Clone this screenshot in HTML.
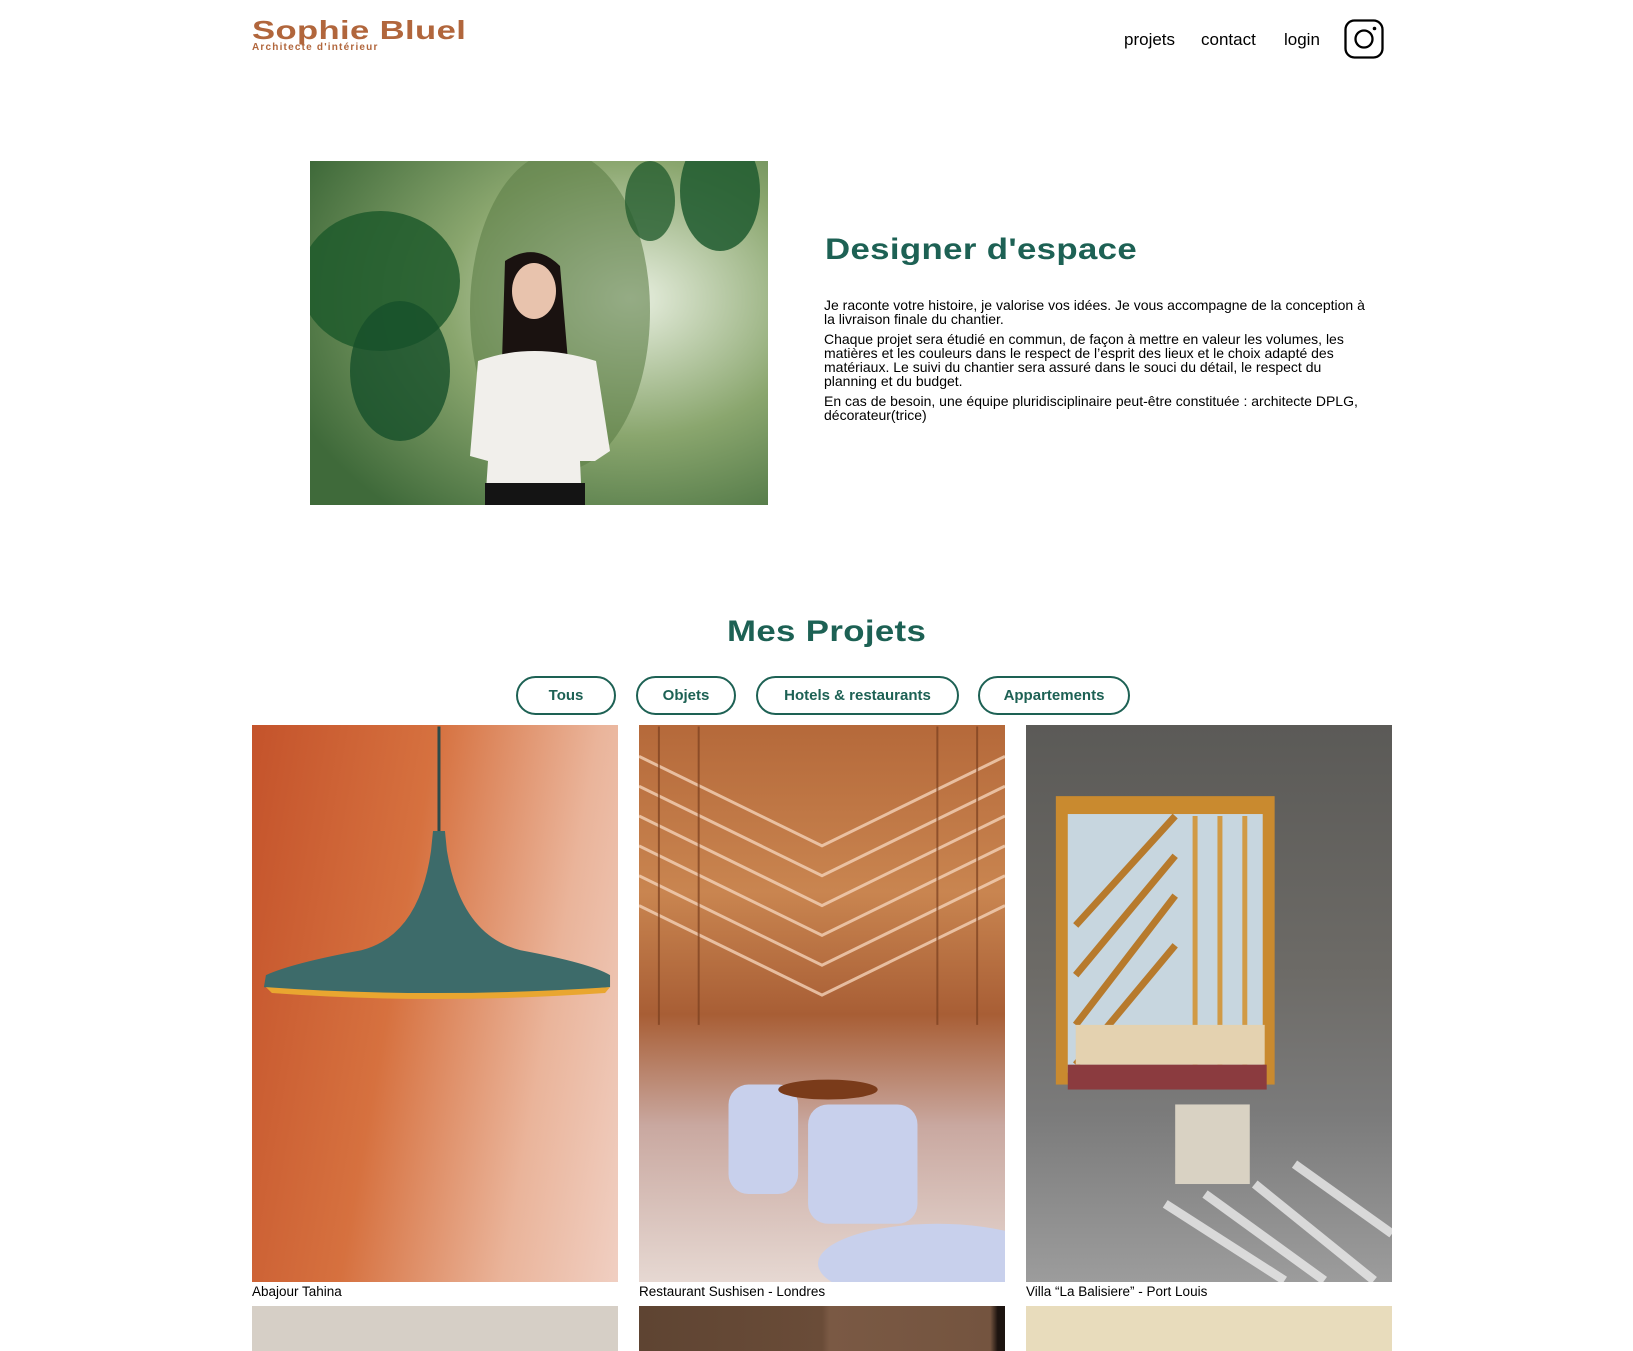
<!DOCTYPE html>
<html><head><meta charset="utf-8">
<style>
*{margin:0;padding:0;box-sizing:border-box}
body{width:1633px;height:1351px;overflow:hidden;background:#fff;font-family:"Liberation Sans",sans-serif;color:#000;position:relative}
.abs{position:absolute}
.logo{left:252px;top:15px;color:#B1663C;font-weight:bold;font-size:26px;letter-spacing:0.3px;transform:scaleX(1.33);transform-origin:left}
.sub{left:252px;top:42px;color:#B1663C;font-weight:bold;font-size:10px;letter-spacing:1.2px}
.nav{top:30px;font-size:17px;color:#000}
.h2{color:#1D6154;font-weight:bold;font-size:30px;letter-spacing:0.3px;transform:scaleX(1.16);transform-origin:left}
.txt{left:824px;top:298px;width:548px;font-size:14px;line-height:14px}
.txt p{margin-bottom:6px}
.btn{position:absolute;top:676px;height:39px;border:2px solid #1D6154;border-radius:20px;color:#1D6154;font-weight:bold;font-size:15px;display:flex;align-items:center;justify-content:center}
.img{position:absolute;top:725px;width:366px;height:557px;overflow:hidden}
.cap{position:absolute;top:1284px;font-size:13.5px}
.b2{position:absolute;top:1306px;width:366px;height:45px}
</style></head><body>
<div class="abs logo">Sophie Bluel</div>
<div class="abs sub">Architecte d'intérieur</div>
<div class="abs nav" style="left:1124px">projets</div>
<div class="abs nav" style="left:1201px">contact</div>
<div class="abs nav" style="left:1284px">login</div>
<svg class="abs" style="left:1344px;top:19px" width="40" height="40" viewBox="0 0 40 40"><rect x="1.5" y="1.5" width="37" height="37" rx="9" fill="none" stroke="#000" stroke-width="2.3"/><circle cx="20" cy="20" r="8.5" fill="none" stroke="#000" stroke-width="2.3"/><circle cx="30.5" cy="9.5" r="1.8"/></svg>

<svg class="abs" style="left:310px;top:161px" width="458" height="344" viewBox="0 0 458 344">
<defs><radialGradient id="bg" cx="0.7" cy="0.4" r="0.8"><stop offset="0" stop-color="#e8efe0"/><stop offset="0.5" stop-color="#8aa66e"/><stop offset="1" stop-color="#3f6a3a"/></radialGradient></defs>
<rect width="458" height="344" fill="url(#bg)"/>
<ellipse cx="250" cy="150" rx="90" ry="160" fill="#5d7e48" opacity="0.6"/>
<ellipse cx="70" cy="120" rx="80" ry="70" fill="#1f5a2c" opacity="0.85"/>
<ellipse cx="90" cy="210" rx="50" ry="70" fill="#17502a" opacity="0.8"/>
<ellipse cx="410" cy="30" rx="40" ry="60" fill="#1e5a2f" opacity="0.85"/>
<ellipse cx="340" cy="40" rx="25" ry="40" fill="#265e30" opacity="0.8"/>
<path d="M195 100 Q225 80 250 105 L258 200 L192 200Z" fill="#1a1210"/>
<ellipse cx="224" cy="130" rx="22" ry="28" fill="#e8c3ad"/>
<path d="M168 200 Q222 180 286 200 L300 290 L285 300 L270 300 L272 344 L175 344 L178 300 L160 295Z" fill="#f1efeb"/>
<rect x="175" y="322" width="100" height="22" fill="#141414"/>
</svg>

<div class="abs h2" style="left:825px;top:233px">Designer d'espace</div>
<div class="abs txt">
<p>Je raconte votre histoire, je valorise vos idées. Je vous accompagne de la conception à la livraison finale du chantier.</p>
<p>Chaque projet sera étudié en commun, de façon à mettre en valeur les volumes, les matières et les couleurs dans le respect de l’esprit des lieux et le choix adapté des matériaux. Le suivi du chantier sera assuré dans le souci du détail, le respect du planning et du budget.</p>
<p>En cas de besoin, une équipe pluridisciplinaire peut-être constituée : architecte DPLG, décorateur(trice)</p>
</div>

<div class="abs h2" style="left:727px;top:615px">Mes Projets</div>
<div class="btn" style="left:516px;width:100px">Tous</div>
<div class="btn" style="left:636px;width:100px">Objets</div>
<div class="btn" style="left:756px;width:203px">Hotels &amp; restaurants</div>
<div class="btn" style="left:978px;width:152px">Appartements</div>

<div class="img" style="left:252px;background:linear-gradient(100deg,#c4532b 0%,#d6713f 40%,#eab49a 75%,#f0cfc2 100%)">
<svg width="366" height="557" viewBox="0 0 368 557"><line x1="188" y1="0" x2="188" y2="105" stroke="#2c4a4a" stroke-width="3"/><path d="M182 105 L194 105 L196 125 Q210 210 270 225 Q340 238 360 250 L360 262 Q250 272 184 272 Q100 272 12 262 L14 250 Q40 238 110 225 Q168 210 180 125Z" fill="#3d6b6a"/><path d="M14 262 Q180 274 360 262 L355 268 Q180 280 20 268Z" fill="#e9a630"/></svg>
</div>
<div class="img" style="left:639px;background:linear-gradient(180deg,#b5693a 0%,#c98550 30%,#a85e35 52%,#c9a8a0 72%,#e6d8d2 100%)">
<svg width="366" height="557" viewBox="0 0 368 557"><g fill="none" stroke="#f4d2b8" stroke-width="3" opacity="0.8"><path d="M0 30 L184 120 L368 30"/><path d="M0 60 L184 150 L368 60"/><path d="M0 90 L184 180 L368 90"/><path d="M0 120 L184 210 L368 120"/><path d="M0 150 L184 240 L368 150"/><path d="M0 180 L184 270 L368 180"/></g><g stroke="#7a3f1f" stroke-width="2" opacity="0.7"><path d="M20 0 L20 300"/><path d="M60 0 L60 300"/><path d="M300 0 L300 300"/><path d="M340 0 L340 300"/></g><g fill="#c8d0ec"><rect x="90" y="360" width="70" height="110" rx="20"/><rect x="170" y="380" width="110" height="120" rx="20"/><ellipse cx="300" cy="540" rx="120" ry="40"/></g><ellipse cx="190" cy="365" rx="50" ry="10" fill="#7a3b1a"/></svg>
</div>
<div class="img" style="left:1026px;background:linear-gradient(180deg,#5b5a57 0%,#6d6b67 45%,#7b7b7b 70%,#9c9c9c 100%)">
<svg width="366" height="557" viewBox="0 0 368 557"><rect x="30" y="70" width="220" height="290" fill="#c98a2f"/><rect x="42" y="88" width="196" height="260" fill="#c7d6df"/><g stroke="#b77a2c" stroke-width="7"><path d="M50 200 L150 90"/><path d="M50 250 L150 130"/><path d="M50 300 L150 170"/><path d="M50 340 L150 220"/></g><g stroke="#d19a45" stroke-width="5"><line x1="170" y1="90" x2="170" y2="345"/><line x1="195" y1="90" x2="195" y2="345"/><line x1="220" y1="90" x2="220" y2="345"/></g><rect x="50" y="300" width="190" height="40" fill="#e4d2b0"/><rect x="42" y="340" width="200" height="25" fill="#8b3b3f"/><rect x="150" y="380" width="75" height="80" fill="#d9d2c3"/><g stroke="#ececec" stroke-width="9" opacity="0.8"><path d="M140 480 L260 557"/><path d="M180 470 L300 557"/><path d="M230 460 L350 557"/><path d="M270 440 L368 510"/></g></svg>
</div>
<div class="cap" style="left:252px">Abajour Tahina</div>
<div class="cap" style="left:639px">Restaurant Sushisen - Londres</div>
<div class="cap" style="left:1026px">Villa “La Balisiere” - Port Louis</div>
<div class="b2" style="left:252px;background:#d6cfc6"></div>
<div class="b2" style="left:639px;background:linear-gradient(90deg,#5e4432 0%,#6a4c38 50%,#7a5944 52%,#74543f 96%,#1d1410 98%)"></div>
<div class="b2" style="left:1026px;background:#e8dcbc"></div>
</body></html>
